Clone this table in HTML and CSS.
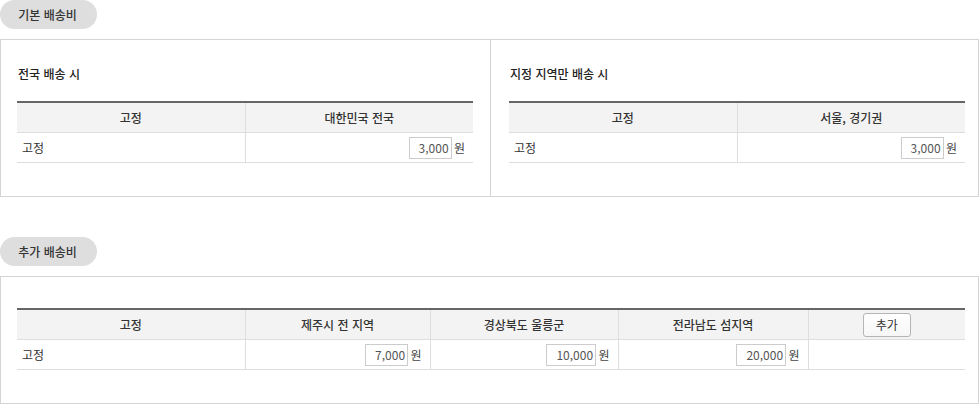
FILE: index.html
```html
<!DOCTYPE html>
<html lang="ko">
<head>
<meta charset="utf-8">
<link rel="stylesheet" href="styles.css">
</head>
<body>
<section class="section">
  <div class="pill">기본 배송비</div>
  <div class="box split">
    <div class="panel panel-left">
      <h3 class="heading">전국 배송 시</h3>
      <table class="tbl">
        <colgroup><col class="c-first"><col></colgroup>
        <thead><tr><th>고정</th><th>대한민국 전국</th></tr></thead>
        <tbody><tr><td class="label">고정</td><td class="val"><span class="num">3,000</span> <span class="unit">원</span></td></tr></tbody>
      </table>
    </div>
    <div class="panel panel-right">
      <h3 class="heading">지정 지역만 배송 시</h3>
      <table class="tbl">
        <colgroup><col class="c-first"><col></colgroup>
        <thead><tr><th>고정</th><th>서울, 경기권</th></tr></thead>
        <tbody><tr><td class="label">고정</td><td class="val"><span class="num">3,000</span> <span class="unit">원</span></td></tr></tbody>
      </table>
    </div>
  </div>
</section>
<section class="section second">
  <div class="pill">추가 배송비</div>
  <div class="box extra">
    <table class="tbl">
      <colgroup><col class="w1"><col class="w2"><col class="w3"><col class="w4"><col></colgroup>
      <thead><tr><th>고정</th><th>제주시 전 지역</th><th>경상북도 울릉군</th><th>전라남도 섬지역</th><th><button class="btn" type="button">추가</button></th></tr></thead>
      <tbody><tr><td class="label">고정</td><td class="val"><span class="num">7,000</span> <span class="unit">원</span></td><td class="val"><span class="num">10,000</span> <span class="unit">원</span></td><td class="val"><span class="num">20,000</span> <span class="unit">원</span></td><td></td></tr></tbody>
    </table>
  </div>
</section>
</body>
</html>
```
FILE: styles.css
```css
html, body {
  margin: 0;
  padding: 0;
  background: #fff;
}
body {
  width: 979px;
  font-family: "Noto Sans CJK KR", "Noto Sans", sans-serif;
  font-size: 12px;
  color: #333;
}
.section {
  display: flex;
  flex-direction: column;
  align-items: flex-start;
}
.second {
  margin-top: 40px;
}
.pill {
  width: 97px;
  height: 29px;
  line-height: 29px;
  background: #dedede;
  border-radius: 15px;
  text-align: center;
  font-size: 12px;
  font-weight: 500;
  color: #333;
  margin-bottom: 10px;
  box-sizing: border-box;
  padding-right: 2px;
}
.box {
  width: 979px;
  box-sizing: border-box;
  border: 1px solid #d4d4d4;
}
.split {
  display: flex;
}
.panel {
  box-sizing: border-box;
  padding-top: 25px;
  padding-bottom: 33px;
}
.panel-left {
  width: 490px;
  border-right: 1px solid #d4d4d4;
  padding-left: 16px;
  padding-right: 17px;
}
.panel-right {
  flex: 1;
  padding-left: 18px;
  padding-right: 13px;
}
.heading {
  margin: 0 0 18px 1px;
  font-size: 12px;
  font-weight: 500;
  line-height: 18px;
  color: #222;
}
.extra {
  padding: 31px 13px 33px 16px;
}
.tbl {
  width: 100%;
  border-collapse: collapse;
  table-layout: fixed;
  border-top: 2px solid #666;
}
.tbl th {
  height: 29px;
  background: #f3f3f3;
  font-weight: 500;
  color: #333;
  text-align: center;
  border-bottom: 1px solid #dedede;
  border-left: 1px solid #dedede;
  padding: 0;
}
.tbl td {
  height: 29px;
  border-bottom: 1px solid #dedede;
  border-left: 1px solid #dedede;
  padding: 0;
}
.tbl th:first-child, .tbl td:first-child {
  border-left: none;
}
.c-first {
  width: 228px;
}
.w1 { width: 228px; }
.w2 { width: 185px; }
.w3 { width: 188px; }
.w4 { width: 190px; }
.label {
  padding-left: 5px !important;
  color: #333;
}
.val {
  text-align: right;
  padding-right: 8px !important;
}
.num {
  display: inline-block;
  height: 20px;
  line-height: 20px;
  border: 1px solid #cccccc;
  padding: 0 2px 0 9px;
  color: #555;
  text-align: right;
  vertical-align: middle;
  margin-right: -1px;
}
.unit {
  display: inline-block;
  vertical-align: middle;
  line-height: 22px;
  color: #444;
}
.btn {
  width: 48px;
  height: 24px;
  border: 1px solid #b5b5b5;
  border-radius: 3px;
  background: linear-gradient(#ffffff, #f6f6f6);
  font-family: inherit;
  font-size: 12px;
  color: #333;
  padding: 0;
  cursor: pointer;
  vertical-align: middle;
}
```
